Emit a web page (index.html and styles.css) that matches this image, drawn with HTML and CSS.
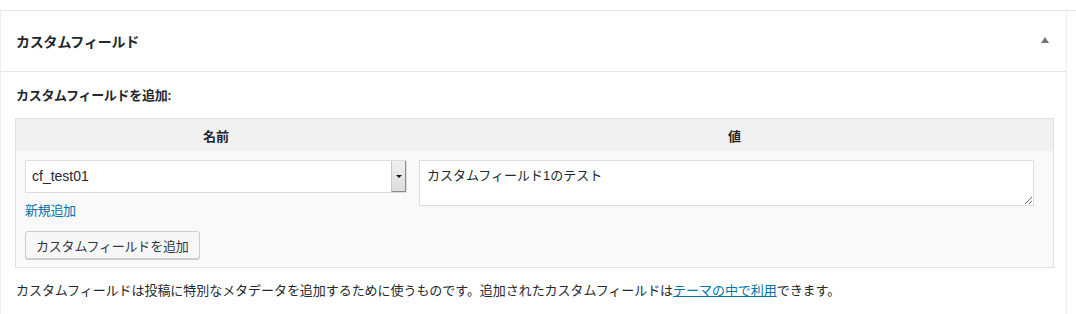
FILE: index.html
```html
<!DOCTYPE html>
<html lang="ja">
<head>
  <meta charset="UTF-8">
  <title>カスタムフィールド</title>
  <link rel="stylesheet" href="styles.css">
</head>
<body>

  <div class="top-rule"></div>

  <div class="postbox">
    <div class="postbox-header">
      <h2 class="hndle">カスタムフィールド</h2>
      <span class="toggle-arrow"></span>
    </div>

    <div class="inside">
      <p class="add-label">カスタムフィールドを追加:</p>

      <table class="meta-table">
        <thead>
          <tr>
            <th class="col-name">名前</th>
            <th class="col-value">値</th>
          </tr>
        </thead>
        <tbody>
          <tr>
            <td class="col-name">
              <div class="meta-select">
                <span class="meta-select-text">cf_test01</span>
                <span class="meta-select-btn"></span>
              </div>
              <a href="#" class="new-link">新規追加</a>
              <button type="button" class="add-button">カスタムフィールドを追加</button>
            </td>
            <td class="col-value">
              <textarea class="meta-value" rows="2">カスタムフィールド1のテスト</textarea>
            </td>
          </tr>
        </tbody>
      </table>

      <p class="help-text">カスタムフィールドは投稿に特別なメタデータを追加するために使うものです。追加されたカスタムフィールドは<a href="#">テーマの中で利用</a>できます。</p>
    </div>
  </div>

</body>
</html>
```

FILE: styles.css
```css
:root {
  --text-color: #23282d;
  --link-color: #0073aa;
  --border: #e5e5e5;
  --table-border: #e1e1e1;
}

body {
  font-family: "Liberation Sans", "Noto Sans CJK JP", sans-serif;
  font-size: 13px;
  margin: 0;
  background: #fff;
  color: var(--text-color);
}

.top-rule {
  height: 10px;
  border-bottom: 1px solid var(--border);
}

.postbox {
  margin-right: 9px;
  border-left: 1px solid #eeeeee;
  border-right: 1px solid #eeeeee;
  height: 303px;
}

.postbox-header {
  display: flex;
  align-items: center;
  justify-content: space-between;
  height: 60px;
  border-bottom: 1px solid var(--border);
  padding: 0 17px 0 15px;
}

.hndle {
  margin: 0;
  font-size: 14px;
  font-weight: bold;
  letter-spacing: -0.2px;
}

.toggle-arrow {
  width: 0;
  height: 0;
  border-left: 4px solid transparent;
  border-right: 4px solid transparent;
  border-bottom: 6px solid #72777c;
  margin-top: -2px;
}

.inside {
  padding: 14px 12px 0 14px;
}

.add-label {
  margin: 0 0 12px 1px;
  font-weight: bold;
  line-height: 20px;
  letter-spacing: -0.3px;
}

.meta-table {
  width: 100%;
  border: 1px solid var(--table-border);
  border-collapse: collapse;
  table-layout: fixed;
  background: #f9f9f9;
}

.meta-table th {
  background: #f1f1f1;
  height: 32px;
  padding: 0;
  font-weight: bold;
  text-align: center;
}

.meta-table th.col-name {
  width: 400px;
}

.meta-table td {
  vertical-align: top;
}

.meta-table td.col-name {
  padding: 9px 9px 8px 9px;
}

.meta-table td.col-value {
  padding: 9px 19px 8px 3px;
}

.meta-select {
  display: flex;
  height: 33px;
  box-sizing: border-box;
  border: 1px solid #dddddd;
  background: #fff;
}

.meta-select-text {
  flex: 1;
  padding-left: 6px;
  line-height: 31px;
  font-size: 14px;
}

.meta-select-btn {
  width: 13px;
  background: linear-gradient(#f0f0f0, #dcdcdc);
  border-left: 1px solid #c8c8c8;
  border-right: 1px solid #8c8c8c;
  border-bottom: 1px solid #8c8c8c;
  position: relative;
}

.meta-select-btn::after {
  content: "";
  position: absolute;
  left: 4px;
  top: 14px;
  border-left: 3px solid transparent;
  border-right: 3px solid transparent;
  border-top: 3px solid #111;
}

.new-link {
  display: block;
  margin-top: 9px;
  line-height: 18px;
  color: var(--link-color);
  text-decoration: none;
  letter-spacing: -0.3px;
}

.add-button {
  display: block;
  margin-top: 11px;
  height: 28px;
  padding: 0 10px;
  font-family: inherit;
  font-size: 13px;
  color: #32373c;
  background: #f7f7f7;
  border: 1px solid #cccccc;
  border-radius: 3px;
  box-shadow: 0 1px 0 #cccccc;
  letter-spacing: -0.2px;
}

.meta-value {
  display: block;
  width: 100%;
  height: 46px;
  box-sizing: border-box;
  margin: 0;
  padding: 5px 7px;
  border: 1px solid #dddddd;
  font-family: inherit;
  font-size: 13px;
  line-height: 19px;
  color: var(--text-color);
}

.help-text {
  margin: 14px 0 0 1px;
  line-height: 18px;
  letter-spacing: -0.05px;
}

.help-text a {
  color: var(--link-color);
}
```
